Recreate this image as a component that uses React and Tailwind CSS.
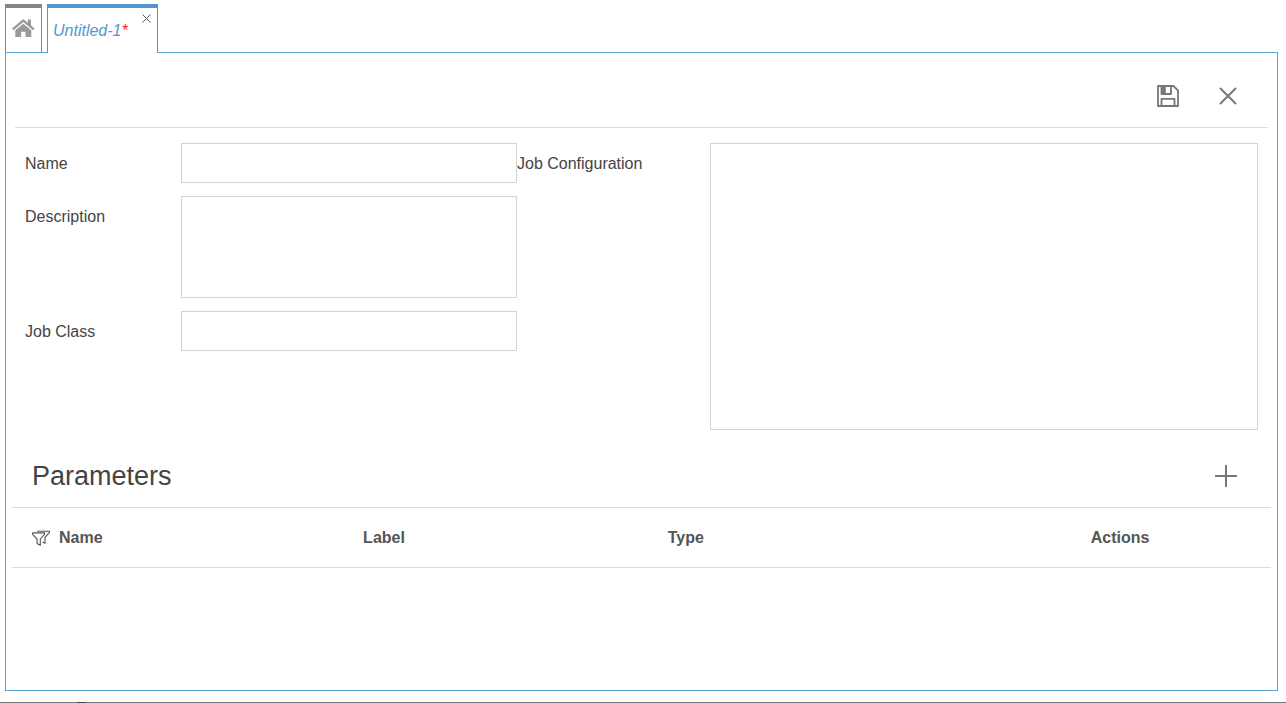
import React from 'react'

const field =
  'block border border-[#d4d4d4] bg-white px-3 text-base text-[#444] outline-none focus:border-[#5596d0]'

function HomeIcon() {
  return (
    <svg width="23" height="19" viewBox="0 0 23 19" fill="#999" aria-hidden="true">
      <path d="M11.3 0 0 9.6l1.5 1.7 9.8-8.2 9.8 8.2 1.5-1.7L19 6.5V.6h-3.2v3.3z" />
      <path d="M11.3 4.7 3.3 11.3V18h5.8v-5.2h4.4V18h5.8v-6.7z" />
    </svg>
  )
}

function SaveIcon() {
  return (
    <svg width="22" height="22" viewBox="0 0 22 22" fill="none" stroke="#777" strokeWidth="1.8" strokeLinejoin="round" aria-hidden="true">
      <path d="M1 1h15.5L21 5.5V21H1z" />
      <path d="M4.5 1v8h9.5V1" />
      <path d="M4.5 1h4.3v8H4.5z" fill="#777" stroke="none" />
      <path d="M4.5 21v-7.2h13V21" />
    </svg>
  )
}

function CrossIcon({ size, width, color }) {
  return (
    <svg width={size} height={size} viewBox="0 0 18 18" fill="none" stroke={color} strokeWidth={width} aria-hidden="true">
      <path d="M1 1l16 16M17 1L1 17" />
    </svg>
  )
}

function PlusIcon() {
  return (
    <svg width="22" height="22" viewBox="0 0 22 22" fill="none" stroke="#777" strokeWidth="2" aria-hidden="true">
      <path d="M11 0v22M0 11h22" />
    </svg>
  )
}

function FilterIcon() {
  return (
    <svg width="18" height="16" viewBox="0 0 18 16" fill="none" stroke="#555" strokeWidth="1.1" strokeLinejoin="round" aria-hidden="true">
      <path d="M.6 2.9h12v1.4L8.3 9v6.3l-3.2-1.8V9L.6 4.3z" />
      <path d="M5.2 1.2h12.2v1.4L13 7.4v5.8l-2.4-1.3" />
    </svg>
  )
}

export default function App() {
  return (
    <div className="flex min-h-screen flex-col bg-white font-['Liberation_Sans',Arial,sans-serif] text-base text-[#444]">
      <div className="flex flex-1 flex-col pt-1 pr-2 pb-[11px] pl-[5px]">
        <nav className="flex gap-[5px]" aria-label="Open tabs">
          <button type="button" aria-label="Home" className="flex h-12 w-[37px] justify-center border-x border-t-4 border-[#868686] pt-[11px]">
            <HomeIcon />
          </button>
          <div className="relative z-10 -mb-px flex w-[111px] items-start border-x border-t-4 border-[#5596d0] bg-white pl-[5px]">
            <a href="#untitled-1" className="pt-[11px] text-base italic text-[#5596d0]">
              Untitled-1<span className="text-[#ff2020]">*</span>
            </a>
            <button type="button" aria-label="Close tab" className="absolute top-[6px] right-[6px]">
              <CrossIcon size={9} width={2} color="#555" />
            </button>
          </div>
        </nav>

        <main className="flex flex-1 flex-col border border-[#5aa5dc] px-[6px]">
          <div className="mx-[3px] flex h-[75px] items-center justify-end gap-10 border-b border-[#dcdce2] pt-3 pr-[31px]">
            <button type="button" aria-label="Save"><SaveIcon /></button>
            <button type="button" aria-label="Close"><CrossIcon size={18} width={2} color="#777" /></button>
          </div>

          <form className="grid grid-cols-[492fr_741fr] px-[13px] pt-[15px]">
            <div className="flex flex-col gap-[13px]">
              <div className="flex">
                <label htmlFor="name" className="w-[156px] pt-[9px]">Name</label>
                <input id="name" type="text" className={`${field} h-10 min-w-0 flex-1`} />
              </div>
              <div className="flex">
                <label htmlFor="description" className="w-[156px] pt-[9px]">Description</label>
                <textarea id="description" className={`${field} h-[102px] min-w-0 flex-1 resize-none`} />
              </div>
              <div className="flex">
                <label htmlFor="job-class" className="w-[156px] pt-[9px]">Job Class</label>
                <input id="job-class" type="text" className={`${field} h-10 min-w-0 flex-1`} />
              </div>
            </div>
            <div className="flex">
              <label htmlFor="job-configuration" className="w-[193px] pt-[9px]">Job Configuration</label>
              <textarea id="job-configuration" className={`${field} h-[287px] min-w-0 flex-1 resize-none`} />
            </div>
          </form>

          <section>
            <div className="flex h-[77px] items-center justify-between pt-[14px] pr-[34px] pl-5">
              <h1 className="text-[27px] leading-8">Parameters</h1>
              <button type="button" aria-label="Add parameter"><PlusIcon /></button>
            </div>
            <table className="w-full table-fixed border-collapse text-left text-base">
              <thead>
                <tr className="h-[60px] border-y border-[#dcdcde] text-[#555]">
                  <th scope="col" className="w-[26.3%] pl-5">
                    <span className="flex items-center gap-[9px]">
                      <FilterIcon />
                      Name
                    </span>
                  </th>
                  <th scope="col" className="w-[24.2%] pl-5">Label</th>
                  <th scope="col" className="w-[33.6%] pl-5">Type</th>
                  <th scope="col" className="pl-5">Actions</th>
                </tr>
              </thead>
              <tbody />
            </table>
          </section>
        </main>
      </div>
      <footer className="flex h-px bg-[#777] pl-[77px]">
        <span className="h-px w-[9px] bg-[#444]" />
      </footer>
    </div>
  )
}
